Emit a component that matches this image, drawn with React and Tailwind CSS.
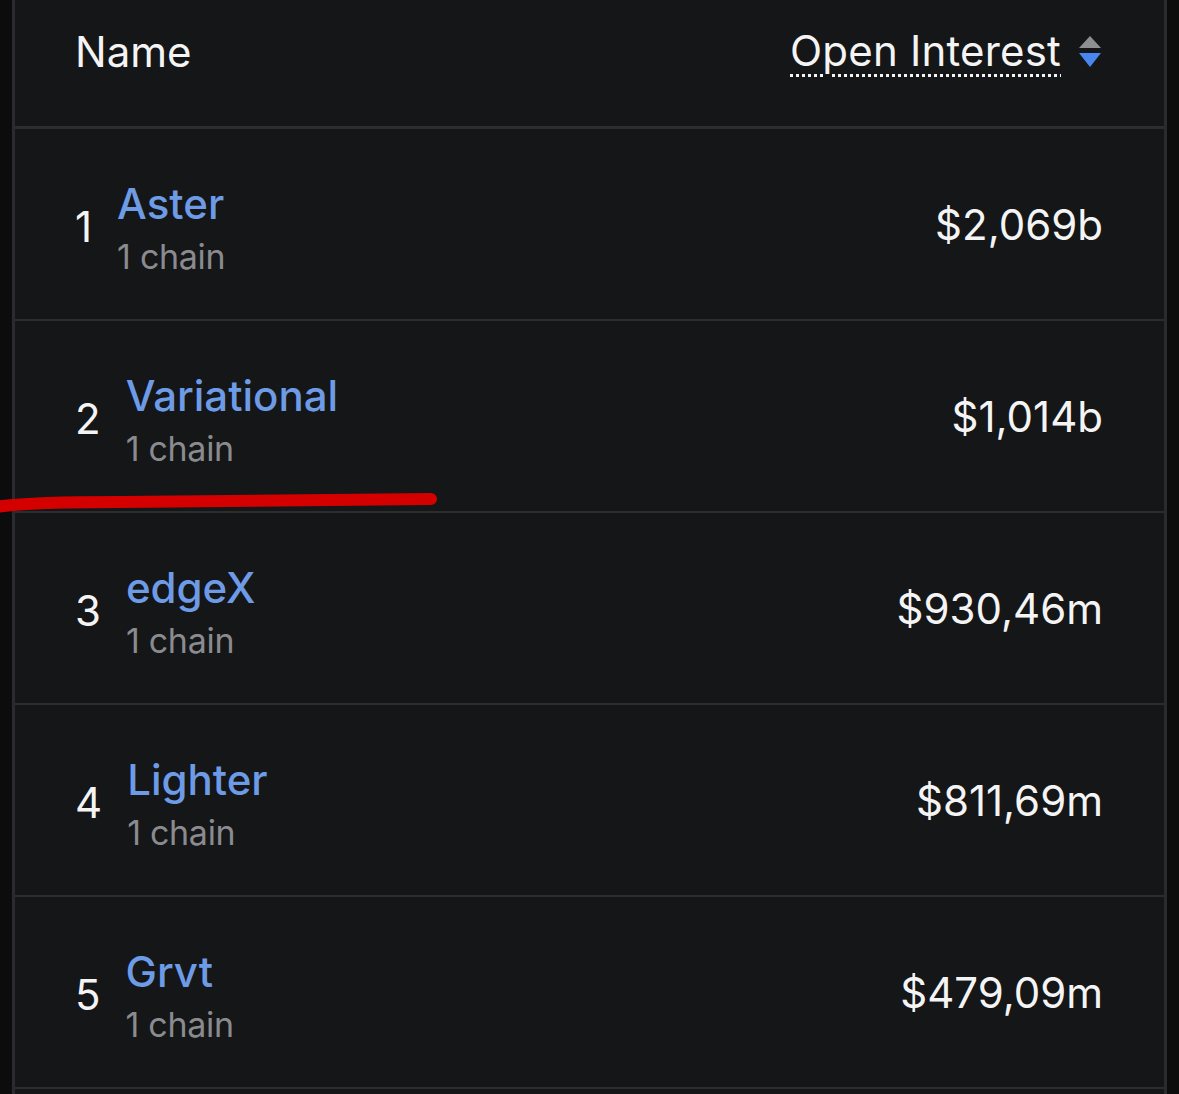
import React from "react";

const rows = [
  { rank: 1, name: "Aster", value: "$2,069b" },
  { rank: 2, name: "Variational", value: "$1,014b" },
  { rank: 3, name: "edgeX", value: "$930,46m" },
  { rank: 4, name: "Lighter", value: "$811,69m" },
  { rank: 5, name: "Grvt", value: "$479,09m" },
];

function SortIcon() {
  return (
    <svg width="22" height="32" viewBox="0 0 22 32" className="shrink-0">
      <path d="M0 12 L11 0 L22 12 Z" fill="#8e8e93" />
      <path d="M0 17 L22 17 L11 31 Z" fill="#4a86ef" />
    </svg>
  );
}

export default function App() {
  return (
    <div
      className="relative w-[1179px] h-[1094px] overflow-hidden bg-[#0c0c0d] flex"
      style={{ fontFamily: "Inter, 'Noto Sans', sans-serif" }}
    >
      <div className="ml-[12px] w-[1155px] h-full border-x-[3px] border-[#2a2b2e] bg-[#151618] flex flex-col">
        <div className="h-[129px] shrink-0 border-b-[3px] border-[#2c2d30] pl-[60px] pr-[63px] pt-[27px] flex justify-between items-start text-[42px] leading-[49px] text-[#f4f4f5]">
          <span>Name</span>
          <div className="flex items-center gap-[18px] mt-[-1px]">
            <span className="underline decoration-dotted decoration-[3px] underline-offset-[8px] tracking-[0.2px]">
              Open Interest
            </span>
            <div className="mt-[2px]">
              <SortIcon />
            </div>
          </div>
        </div>
        {rows.map((r) => (
          <div
            key={r.rank}
            className="h-[192px] shrink-0 border-b-2 border-[#2c2d30] pl-[60px] pr-[61px] flex items-center justify-between"
          >
            <div className="flex items-center gap-[25px]">
              <span className="text-[42px] leading-[49px] text-[#f4f4f5] mt-[4px]">{r.rank}</span>
              <div className="flex flex-col pt-[10px]">
                <span className="text-[42px] leading-[48px] text-[#6e9be6] font-medium">
                  {r.name}
                </span>
                <span className="text-[34px] leading-[44px] text-[#8b8b8f] mt-[7px] tracking-[-0.3px]">
                  1 chain
                </span>
              </div>
            </div>
            <span className="text-[42px] leading-[49px] text-[#f4f4f5]">{r.value}</span>
          </div>
        ))}
      </div>
      <svg
        className="absolute left-0 top-0 pointer-events-none"
        width="1179"
        height="1094"
        viewBox="0 0 1179 1094"
      >
        <path
          d="M-4 507 C 20 503, 60 502, 120 502 L 431 499"
          fill="none"
          stroke="#d40000"
          strokeWidth="12"
          strokeLinecap="round"
        />
      </svg>
    </div>
  );
}
